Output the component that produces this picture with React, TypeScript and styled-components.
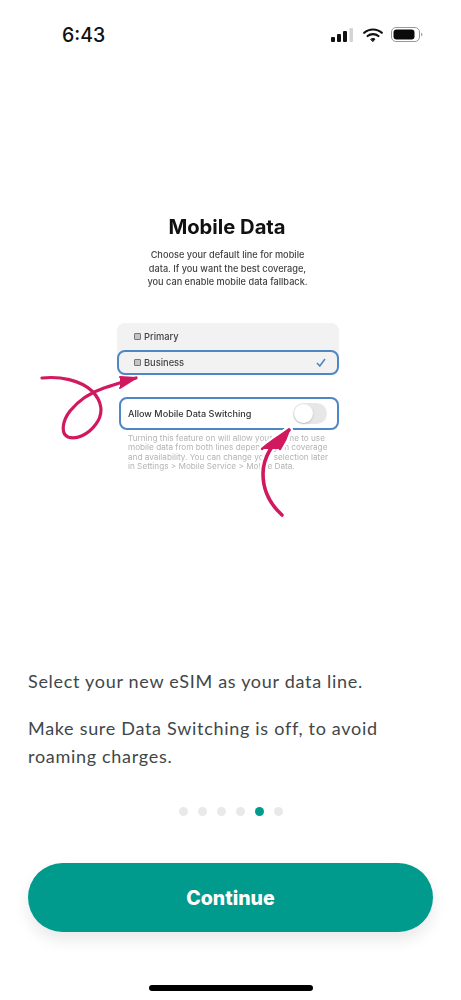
import React from "react";
import styled, { createGlobalStyle } from "styled-components";

const GlobalStyle = createGlobalStyle`
  html, body {
    margin: 0;
    padding: 0;
    background: #fff;
  }
`;

const Page = styled.div`
  position: relative;
  width: 461px;
  height: 1000px;
  overflow: hidden;
  display: flex;
  flex-direction: column;
  background: #fff;
  font-family: "Lato", "Open Sans", sans-serif;
`;

const StatusBar = styled.div`
  height: 70px;
  box-sizing: border-box;
  padding: 24px 38px 0 62px;
  display: flex;
  justify-content: space-between;
  align-items: flex-start;
`;

const Time = styled.span`
  font-family: "Inter", "Liberation Sans", sans-serif;
  font-size: 19.5px;
  line-height: 22px;
  font-weight: 500;
  color: #111;
`;

const StatusIcons = styled.div`
  display: flex;
  align-items: center;
  gap: 8px;
  padding-top: 3px;
`;

const SignalSvg = styled.svg`
  margin-right: 2px;
`;

const Figure = styled.div`
  width: 222px;
  height: 520px;
  box-sizing: border-box;
  margin-left: 117px;
  padding-top: 145px;
  filter: blur(0.6px);
  flex: none;
`;

const FigureTitle = styled.div`
  font-family: "Inter", "Liberation Sans", sans-serif;
  font-size: 20.2px;
  line-height: 24px;
  font-weight: 700;
  color: #111;
  text-align: center;
  margin-right: 2px;
`;

const FigureText = styled.div`
  margin: 9px 1px 0 0;
  font-family: "Inter", "Liberation Sans", sans-serif;
  font-size: 9.2px;
  line-height: 13.5px;
  font-weight: 500;
  color: #444;
  text-align: center;
`;

const LineList = styled.div`
  margin-top: 34px;
  background: #f2f2f3;
  border-radius: 8px;
`;

const LineRow = styled.div<{ $selected?: boolean }>`
  height: ${(p) => (p.$selected ? 25 : 27)}px;
  box-sizing: border-box;
  padding: 0 11px 0 ${(p) => (p.$selected ? 15 : 17)}px;
  display: flex;
  align-items: center;
  gap: 3px;
  font-family: "Inter", "Liberation Sans", sans-serif;
  font-size: 9.3px;
  font-weight: 500;
  color: #444;
  border-radius: 8px;
  border: ${(p) => (p.$selected ? "2px solid #4f86c6" : "0 none")};
`;

const SimMark = styled.span`
  width: 7px;
  height: 7px;
  box-sizing: border-box;
  border: 1.5px solid #777;
  border-radius: 1px;
  background: #c4c4c4;
`;

const Tick = styled.svg`
  margin-left: auto;
`;

const SwitchRow = styled.div`
  margin: 22px 0 0 2px;
  height: 33px;
  box-sizing: border-box;
  padding: 0 10px 0 7px;
  display: flex;
  align-items: center;
  justify-content: space-between;
  border: 2px solid #4f86c6;
  border-radius: 8px;
  background: #fff;
  font-family: "Inter", "Liberation Sans", sans-serif;
  font-size: 9.1px;
  font-weight: 500;
  color: #333;
`;

const Toggle = styled.span`
  width: 34px;
  height: 21px;
  border-radius: 11px;
  background: #e7e7e8;
  display: flex;
  align-items: center;
  padding-left: 1px;
  box-sizing: border-box;
`;

const Knob = styled.span`
  width: 19px;
  height: 19px;
  border-radius: 50%;
  background: #fff;
  box-shadow: 0 1px 2px rgba(0, 0, 0, 0.2);
`;

const FigureNote = styled.div`
  margin: 4px 0 0 11px;
  font-family: "Inter", "Liberation Sans", sans-serif;
  font-size: 8.2px;
  line-height: 9.6px;
  color: #b4b4b8;
  white-space: nowrap;
`;

const Arrows = styled.svg`
  position: absolute;
  left: 0;
  top: 0;
  pointer-events: none;
  filter: blur(0.4px);
`;

const Instructions = styled.div`
  margin-top: 77px;
  padding: 0 28px;
  display: flex;
  flex-direction: column;
  gap: 19px;
`;

const Paragraph = styled.p`
  margin: 0;
  font-size: 18px;
  line-height: 28px;
  letter-spacing: 0.7px;
  color: #3f474a;
`;

const Dots = styled.div`
  margin-top: 37px;
  display: flex;
  justify-content: center;
  gap: 10px;
`;

const Dot = styled.span<{ $active?: boolean }>`
  width: 9px;
  height: 9px;
  border-radius: 50%;
  background: ${(p) => (p.$active ? "#009b8c" : "#e9e8eb")};
`;

const ContinueButton = styled.button`
  margin: 47px 28px 0;
  height: 69px;
  border: 0;
  border-radius: 35px;
  background: #009b8c;
  box-shadow: 0 8px 16px rgba(0, 0, 0, 0.09);
  color: #fff;
  font-family: "Inter", "Open Sans", sans-serif;
  font-size: 19.5px;
  font-weight: 800;
`;

const HomeBar = styled.div`
  margin: 53px 0 0 149px;
  width: 164px;
  height: 6px;
  border-radius: 3px;
  background: #000;
`;

const SignalIcon = () => (
  <SignalSvg width="22" height="14" viewBox="0 0 22 14">
    <rect x="0" y="9" width="4" height="5" rx="1" fill="#111" />
    <rect x="6" y="6" width="4" height="8" rx="1" fill="#111" />
    <rect x="12" y="3" width="4" height="11" rx="1" fill="#111" />
    <rect x="18.5" y="0" width="3.5" height="14" rx="1" fill="#d4d4d4" />
  </SignalSvg>
);

const WifiIcon = () => (
  <svg width="20" height="14" viewBox="0 0 20 14" fill="none" stroke="#111" strokeLinecap="round">
    <path d="M1.2 4.8C6 .4 14 .4 18.8 4.8" strokeWidth="2.2" />
    <path d="M4.6 8C7.6 5.4 12.4 5.4 15.4 8" strokeWidth="2.2" />
    <path d="M8 11.1C9.2 10.2 10.8 10.2 12 11.1L10 13.4Z" fill="#111" strokeWidth="1" />
  </svg>
);

const BatteryIcon = () => (
  <svg width="32" height="15" viewBox="0 0 32 15">
    <rect x="0.5" y="0.5" width="28" height="14" rx="4.5" fill="none" stroke="#999" />
    <rect x="2.5" y="2.5" width="21" height="10" rx="3" fill="#0a0a0a" />
    <path d="M30 5.5C31 6 31.5 6.7 31.5 7.5S31 9 30 9.5Z" fill="#aaa" />
  </svg>
);

const loopArrow = "M42 378C60 376 80 380 92 391C102 401 104 413 96 424C88 435 76 440 68 437C60 433 63 420 70 411C79 400 92 392 104 388C114 385 125 381 136 378";
const loopHead = "M120 377L136 378L120 388";
const upArrow = "M282 515C270 504 263 490 263 474C263 458 272 442 289 430";
const upHead = "M262 449C270 442 279 436 289 430C287 437 284 443 280 449";

const App = () => {
  const dots = [0, 1, 2, 3, 4, 5];

  return (
    <Page>
      <GlobalStyle />
      <StatusBar>
        <Time>6:43</Time>
        <StatusIcons>
          <SignalIcon />
          <WifiIcon />
          <BatteryIcon />
        </StatusIcons>
      </StatusBar>

      <Figure>
        <FigureTitle>Mobile Data</FigureTitle>
        <FigureText>
          Choose your default line for mobile
          <br />
          data. If you want the best coverage,
          <br />
          you can enable mobile data fallback.
        </FigureText>
        <LineList>
          <LineRow>
            <SimMark />
            Primary
          </LineRow>
          <LineRow $selected>
            <SimMark />
            Business
            <Tick width="10" height="9" viewBox="0 0 10 9" fill="none" stroke="#4f86c6" strokeWidth="1.6">
              <path d="M1 5L3.8 8L9 1" />
            </Tick>
          </LineRow>
        </LineList>
        <SwitchRow>
          Allow Mobile Data Switching
          <Toggle>
            <Knob />
          </Toggle>
        </SwitchRow>
        <FigureNote>
          Turning this feature on will allow your phone to use
          <br />
          mobile data from both lines depending on coverage
          <br />
          and availability. You can change your selection later
          <br />
          in Settings &gt; Mobile Service &gt; Mobile Data.
        </FigureNote>
      </Figure>

      <Arrows width="461" height="1000" viewBox="0 0 461 1000" fill="none" strokeLinecap="round" strokeLinejoin="round">
        <path d={upArrow} stroke="#fff" strokeWidth="8" />
        <path d={upHead} stroke="#fff" strokeWidth="7" />
        <path d={loopArrow} stroke="#d1195f" strokeWidth="3.2" />
        <path d={loopHead} stroke="#d1195f" strokeWidth="2" fill="#d1195f" />
        <path d={upArrow} stroke="#d1195f" strokeWidth="3.6" />
        <path d={upHead} stroke="#d1195f" strokeWidth="2.4" fill="#d1195f" />
      </Arrows>

      <Instructions>
        <Paragraph>Select your new eSIM as your data line.</Paragraph>
        <Paragraph>
          Make sure Data Switching is off, to avoid
          <br />
          roaming charges.
        </Paragraph>
      </Instructions>

      <Dots>
        {dots.map((d) => (
          <Dot key={d} $active={d === 4} />
        ))}
      </Dots>

      <ContinueButton>Continue</ContinueButton>
      <HomeBar />
    </Page>
  );
};

export default App;
